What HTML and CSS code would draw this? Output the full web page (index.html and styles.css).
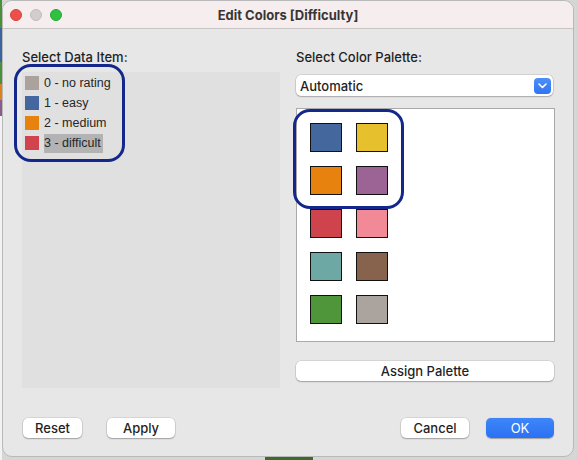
FILE: index.html
```html
<!DOCTYPE html>
<html>
<head>
<meta charset="utf-8">
<link rel="stylesheet" href="styles.css">
</head>
<body>
<div class="window">
  <div class="titlebar">
    <div class="lights">
      <span class="light red"></span>
      <span class="light gray"></span>
      <span class="light green"></span>
    </div>
    <div class="title">Edit Colors [Difficulty]</div>
    <div></div>
  </div>
  <div class="main">
    <div class="col">
      <div class="label">Select Data Item:</div>
      <div class="list">
        <div class="annot annot-left"></div>
        <div class="item"><span class="sw c-gray"></span><span class="txt">0 - no rating</span></div>
        <div class="item"><span class="sw c-blue"></span><span class="txt">1 - easy</span></div>
        <div class="item"><span class="sw c-orange"></span><span class="txt">2 - medium</span></div>
        <div class="item"><span class="sw c-red"></span><span class="txt sel">3 - difficult</span></div>
      </div>
    </div>
    <div class="col">
      <div class="label">Select Color Palette:</div>
      <div class="select">
        <span>Automatic</span>
        <span class="chev"><svg width="9" height="6" viewBox="0 0 9 6"><path d="M1 1 L4.5 4.5 L8 1" fill="none" stroke="#fff" stroke-width="1.6" stroke-linecap="round" stroke-linejoin="round"/></svg></span>
      </div>
      <div class="palette">
        <div class="annot annot-right"></div>
        <div class="grid">
          <span class="psw p-blue"></span><span class="psw p-yellow"></span>
          <span class="psw p-orange"></span><span class="psw p-purple"></span>
          <span class="psw p-red"></span><span class="psw p-pink"></span>
          <span class="psw p-teal"></span><span class="psw p-brown"></span>
          <span class="psw p-green"></span><span class="psw p-gray"></span>
        </div>
      </div>
      <div class="btn wide">Assign Palette</div>
    </div>
  </div>
  <div class="footer">
    <div class="group">
      <div class="btn w59">Reset</div>
      <div class="btn w68">Apply</div>
    </div>
    <div class="group right">
      <div class="btn w68">Cancel</div>
      <div class="btn w68 primary">OK</div>
    </div>
  </div>
</div>
</body>
</html>
```
FILE: styles.css
```css
* { box-sizing: border-box; }
html, body { margin: 0; padding: 0; }
body {
  width: 577px;
  height: 460px;
  overflow: hidden;
  background:
    linear-gradient(to bottom, #4a8f3a 0 28px, #3d63a0 28px 62px, #4a8f3a 62px 84px, #e0801a 84px 100px, #8a5a8f 100px 116px, #f2f2f2 116px) left top / 2px 100% no-repeat,
    linear-gradient(to right, transparent 265px, #3f6a2e 265px 313px, transparent 313px) left bottom / 100% 4px no-repeat,
    #d6d6d6;
  font-family: Inter, "Liberation Sans", sans-serif;
  color: #1f1f1f;
}
.window {
  margin-left: 2px;
  width: 572px;
  height: 457px;
  background: #e7e7e7;
  border: 1px solid #b9b9b9;
  border-radius: 10px;
  overflow: hidden;
  display: flex;
  flex-direction: column;
}
.titlebar {
  height: 28px;
  flex: none;
  background: #f6eeee;
  border-bottom: 1px solid #c9c5c5;
  display: grid;
  grid-template-columns: 1fr auto 1fr;
  align-items: center;
}
.lights {
  display: flex;
  gap: 8px;
  padding-left: 7px;
}
.light {
  width: 12px;
  height: 12px;
  border-radius: 50%;
  display: block;
}
.light.red { background: #ee4f4b; border: 0.5px solid #d8403c; }
.light.gray { background: #d2cece; border: 0.5px solid #c0bcbc; }
.light.green { background: #2fc241; border: 0.5px solid #24a834; }
.title {
  font-size: 13px;
  font-weight: 700;
  color: #3a3535;
}
.main {
  display: grid;
  grid-template-columns: 258px 259px;
  column-gap: 16px;
  padding: 20px 0 0 19px;
}
.label {
  font-size: 13px;
  font-weight: 500;
  line-height: 16px;
  height: 16px;
  color: #1f1f1f;
}
.list {
  position: relative;
  margin-top: 7px;
  height: 316px;
  background: #e0e0e0;
  padding: 1px 0 0 3px;
}
.item {
  display: flex;
  align-items: center;
  height: 20px;
  gap: 5px;
}
.sw {
  width: 14px;
  height: 14px;
  display: block;
  flex: none;
}
.txt {
  font-family: "Liberation Sans", Arial, sans-serif;
  font-size: 12.5px;
  line-height: 19px;
  color: #262626;
  padding-right: 2px;
}
.txt.sel { background: #b3b3b3; }
.c-gray { background: #aca29d; }
.c-blue { background: #4467a0; }
.c-orange { background: #e8820e; }
.c-red { background: #d1444d; }
.annot {
  position: absolute;
  border: 3px solid #13288a;
  border-radius: 17px;
  pointer-events: none;
}
.annot-left { left: -8px; top: -8px; width: 111px; height: 98px; }
.annot-right { left: -4px; top: 0; width: 111px; height: 100px; }
.select {
  margin-top: 10px;
  width: 257px;
  height: 21px;
  background: #fff;
  border-radius: 5px;
  box-shadow: 0 0 0 0.5px rgba(0,0,0,0.18), 0 1px 1.5px rgba(0,0,0,0.2);
  display: flex;
  align-items: center;
  justify-content: space-between;
  padding: 0 2px 0 4px;
  font-size: 13px;
  font-weight: 500;
  color: #1f1f1f;
}
.chev {
  width: 17px;
  height: 16px;
  border-radius: 4px;
  background: linear-gradient(#4d8ff8, #2f74f3);
  display: flex;
  align-items: center;
  justify-content: center;
}
.palette {
  position: relative;
  margin-top: 12px;
  height: 234px;
  background: #fff;
  border: 1px solid #a9a9a9;
  padding: 14px 0 0 13px;
}
.grid {
  display: grid;
  grid-template-columns: repeat(2, 32px);
  grid-auto-rows: 29px;
  column-gap: 14px;
  row-gap: 14px;
}
.psw { display: block; border: 1px solid #111; }
.p-blue { background: #44679e; }
.p-yellow { background: #e6c12d; }
.p-orange { background: #e7820f; }
.p-purple { background: #9b6495; }
.p-red { background: #cf434c; }
.p-pink { background: #f18a96; }
.p-teal { background: #6ea8a4; }
.p-brown { background: #87634d; }
.p-green { background: #4f963a; }
.p-gray { background: #aba39e; }
.btn {
  height: 20px;
  line-height: 20px;
  background: #fff;
  border-radius: 5px;
  box-shadow: 0 0 0 0.5px rgba(0,0,0,0.15), 0 1px 1.5px rgba(0,0,0,0.25);
  text-align: center;
  font-size: 13px;
  font-weight: 500;
  color: #1f1f1f;
}
.btn.wide { margin-top: 19px; width: 258px; }
.w59 { width: 59px; }
.w68 { width: 68px; }
.btn.primary {
  background: linear-gradient(#3e86f7, #2b71f4);
  color: #fff;
  font-weight: 400;
  box-shadow: 0 0.5px 1px rgba(0,0,0,0.3);
}
.footer {
  margin-top: 30px;
  display: flex;
  justify-content: space-between;
  padding: 0 19px 0 20px;
}
.group { display: flex; gap: 25px; }
.group.right { gap: 17px; }
```
